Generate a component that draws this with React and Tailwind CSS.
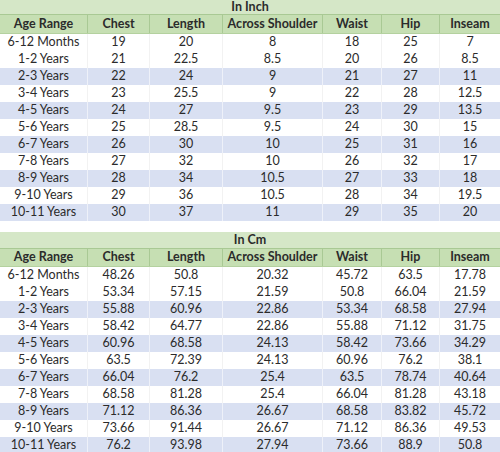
const inch = [
  ["6-12 Months", "19", "20", "8", "18", "25", "7"],
  ["1-2 Years", "21", "22.5", "8.5", "20", "26", "8.5"],
  ["2-3 Years", "22", "24", "9", "21", "27", "11"],
  ["3-4 Years", "23", "25.5", "9", "22", "28", "12.5"],
  ["4-5 Years", "24", "27", "9.5", "23", "29", "13.5"],
  ["5-6 Years", "25", "28.5", "9.5", "24", "30", "15"],
  ["6-7 Years", "26", "30", "10", "25", "31", "16"],
  ["7-8 Years", "27", "32", "10", "26", "32", "17"],
  ["8-9 Years", "28", "34", "10.5", "27", "33", "18"],
  ["9-10 Years", "29", "36", "10.5", "28", "34", "19.5"],
  ["10-11 Years", "30", "37", "11", "29", "35", "20"],
];

const cm = [
  ["6-12 Months", "48.26", "50.8", "20.32", "45.72", "63.5", "17.78"],
  ["1-2 Years", "53.34", "57.15", "21.59", "50.8", "66.04", "21.59"],
  ["2-3 Years", "55.88", "60.96", "22.86", "53.34", "68.58", "27.94"],
  ["3-4 Years", "58.42", "64.77", "22.86", "55.88", "71.12", "31.75"],
  ["4-5 Years", "60.96", "68.58", "24.13", "58.42", "73.66", "34.29"],
  ["5-6 Years", "63.5", "72.39", "24.13", "60.96", "76.2", "38.1"],
  ["6-7 Years", "66.04", "76.2", "25.4", "63.5", "78.74", "40.64"],
  ["7-8 Years", "68.58", "81.28", "25.4", "66.04", "81.28", "43.18"],
  ["8-9 Years", "71.12", "86.36", "26.67", "68.58", "83.82", "45.72"],
  ["9-10 Years", "73.66", "91.44", "26.67", "71.12", "86.36", "49.53"],
  ["10-11 Years", "76.2", "93.98", "27.94", "73.66", "88.9", "50.8"],
];

const headers = ["Age Range", "Chest", "Length", "Across Shoulder", "Waist", "Hip", "Inseam"];
const cols = "grid grid-cols-[88px_62px_73px_100px_59px_58px_60px]";

function SizeTable({ title, rows, titleH, headH }) {
  return (
    <div>
      <div className={`${titleH} bg-[#d5e7c7] border-b border-[#a9c994] flex items-center justify-center font-bold`}>
        {title}
      </div>
      <div className={`${cols} ${headH} bg-[#c6dfb3] border-b border-[#b4d19f] font-bold`}>
        {headers.map((h, i) => (
          <div key={h} className={`flex items-center justify-center ${i < 6 ? "border-r border-[#a9c994]" : ""}`}>
            {h}
          </div>
        ))}
      </div>
      {rows.map((r, idx) => {
        const blue = idx >= 2 && idx % 2 === 0;
        return (
          <div key={r[0]} className={`${cols} h-[17px] ${blue ? "bg-[#d9e0f2]" : "bg-white"}`}>
            {r.map((c, i) => (
              <div key={i} className={`flex items-center justify-center ${i < 6 ? (blue ? "border-r border-[#eef1f9]" : "border-r border-[#f2f2f2]") : ""}`}>
                {c}
              </div>
            ))}
          </div>
        );
      })}
    </div>
  );
}

export default function App() {
  return (
    <div className="w-[500px] h-[452px] overflow-hidden bg-white text-[12.5px] leading-none text-[#2b2b2b] font-['Lato',sans-serif]">
      <SizeTable title="In Inch" rows={inch} titleH="h-[15px]" headH="h-[19px]" />
      <div className="h-[11px]" />
      <SizeTable title="In Cm" rows={cm} titleH="h-[17px]" headH="h-[18px]" />
    </div>
  );
}
